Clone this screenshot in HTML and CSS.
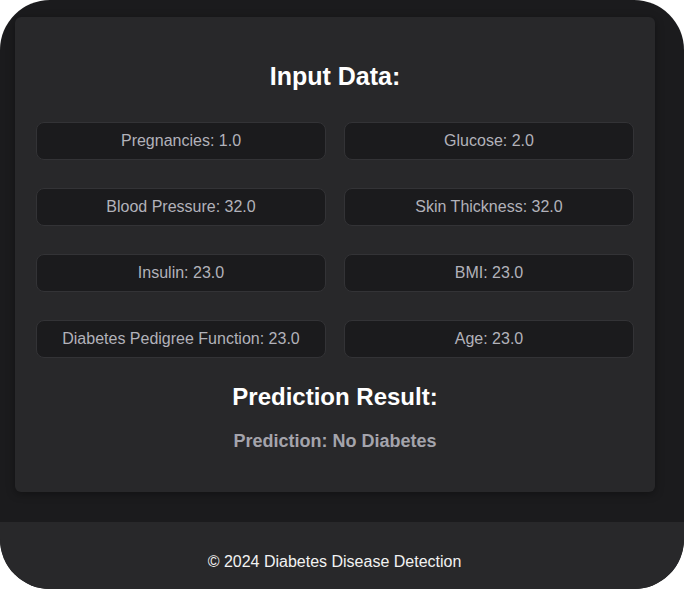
FILE: index.html
```html
<!DOCTYPE html>
<html lang="en">
<head>
<meta charset="utf-8">
<title>Diabetes Disease Detection</title>
<link rel="stylesheet" href="styles.css">
</head>
<body>
<div class="page">
  <main class="wrap">
    <section class="card">
      <h2 class="title main-title">Input Data:</h2>
      <div class="grid">
        <div class="field">Pregnancies: 1.0</div>
        <div class="field">Glucose: 2.0</div>
        <div class="field">Blood Pressure: 32.0</div>
        <div class="field">Skin Thickness: 32.0</div>
        <div class="field">Insulin: 23.0</div>
        <div class="field">BMI: 23.0</div>
        <div class="field">Diabetes Pedigree Function: 23.0</div>
        <div class="field">Age: 23.0</div>
      </div>
      <h2 class="title result-title">Prediction Result:</h2>
      <p class="result">Prediction: No Diabetes</p>
    </section>
  </main>
  <footer class="footer">&copy; 2024 Diabetes Disease Detection</footer>
</div>
</body>
</html>
```
FILE: styles.css
```css
html {
  background: #ffffff;
}
body {
  margin: 0;
  font-family: "Liberation Sans", Arial, sans-serif;
}
.page {
  height: 589px;
  border-radius: 50px;
  overflow: hidden;
  background: #1b1b1d;
  display: flex;
  flex-direction: column;
}
.wrap {
  padding: 17px 0 30px 15px;
}
.card {
  width: 640px;
  box-sizing: border-box;
  background: #28282a;
  border-radius: 6px;
  padding: 20px 21px 40px;
  box-shadow: 0 2px 8px rgba(0, 0, 0, 0.35);
}
.title {
  margin: 0;
  font-size: 24px;
  line-height: 27px;
  font-weight: bold;
  text-align: center;
  color: #ffffff;
}
.main-title {
  margin: 26px 0 32px;
  font-size: 25px;
}
.grid {
  display: grid;
  grid-template-columns: 1fr 1fr;
  gap: 28px 18px;
}
.field {
  background: #1b1b1d;
  border: 1px solid #333336;
  border-radius: 8px;
  padding: 9px 8px;
  font-size: 16px;
  line-height: 18px;
  text-align: center;
  color: #b2b2ba;
}
.result-title {
  margin-top: 25px;
}
.result {
  margin: 21px 0 0;
  font-size: 18px;
  line-height: 21px;
  font-weight: bold;
  text-align: center;
  color: #a4a4ac;
}
.footer {
  flex: 1;
  background: #28282a;
  padding: 31px 15px 0 0;
  font-size: 16px;
  line-height: 18px;
  text-align: center;
  color: #f2f2f2;
}
```
